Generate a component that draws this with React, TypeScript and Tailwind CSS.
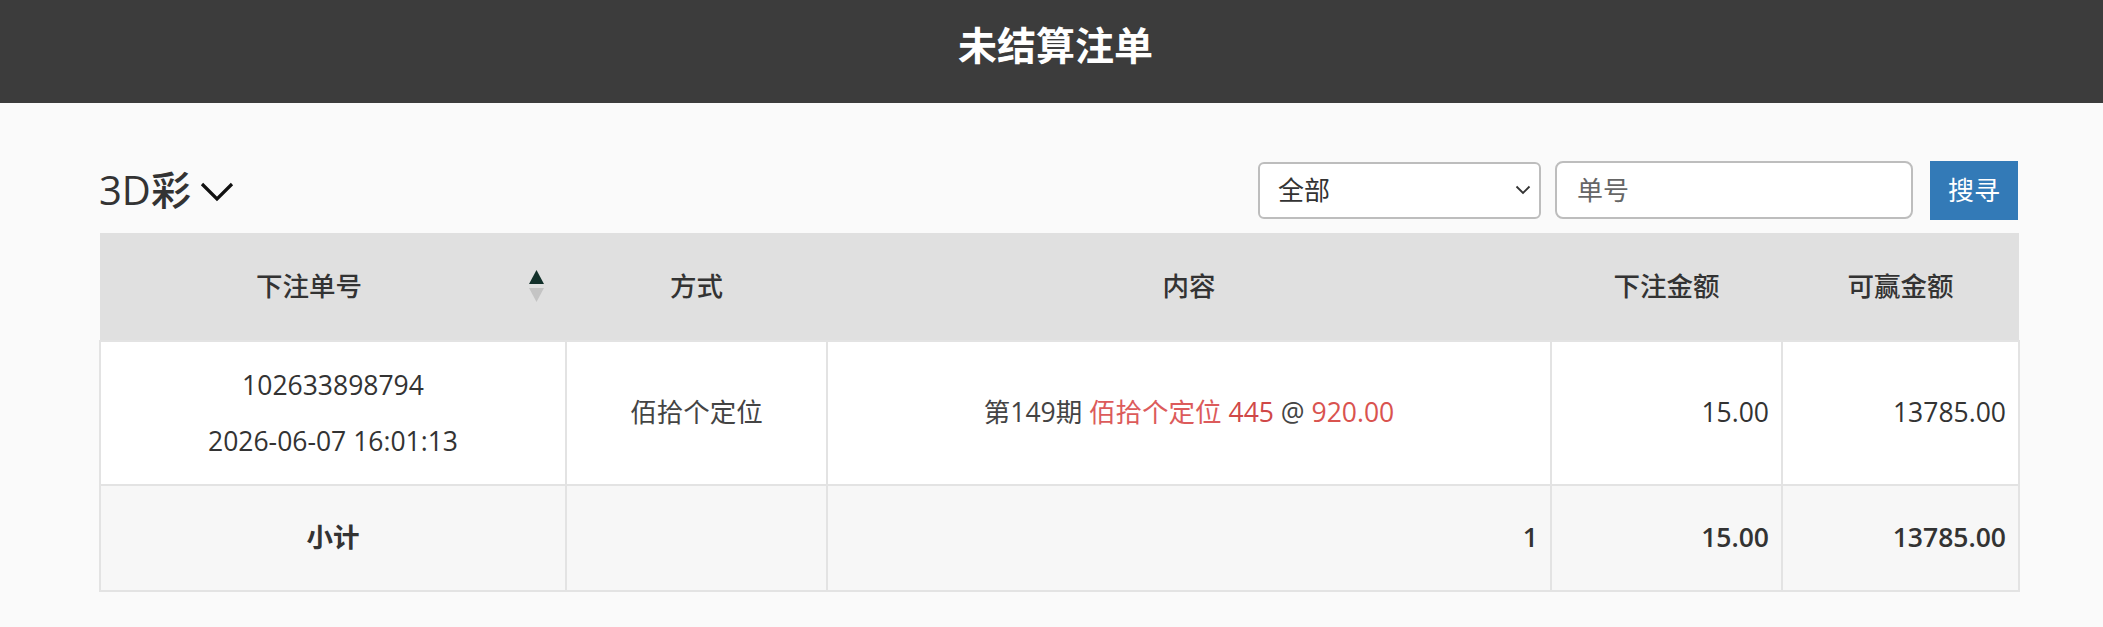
import React from "react";

const font = { fontFamily: '"Open Sans", "Noto Sans CJK SC", sans-serif' };

export default function App() {
  return (
    <div className="min-h-[627px] bg-[#fafafa] text-[#333]" style={font}>
      <div className="h-[103px] bg-[#3c3c3c] flex items-center justify-center pb-[14px] pl-[8px]">
        <h1 className="text-[39px] font-bold text-white leading-none">未结算注单</h1>
      </div>
      <div className="pl-[99px] pr-[85px] pt-[57px]">
        <div className="flex items-center justify-between h-[60px]">
          <div className="flex items-center gap-[8px] text-[40px] text-[#333] leading-none font-medium">
            <span>3D彩</span>
            <svg width="36" height="22" viewBox="0 0 36 22" className="mt-[4px]">
              <path d="M3 3 L18 18 L33 3" fill="none" stroke="#111" strokeWidth="3.2" />
            </svg>
          </div>
          <div className="flex items-center">
            <div className="w-[283px] h-[57px] border-2 border-[#bdbdbd] rounded-[6px] bg-white flex items-center justify-between pl-[18px] pr-[8px] text-[26px] text-[#333]">
              <span>全部</span>
              <svg width="16" height="10" viewBox="0 0 16 10">
                <path d="M1.5 1.5 L8 8 L14.5 1.5" fill="none" stroke="#333" strokeWidth="1.8" />
              </svg>
            </div>
            <div className="ml-[14px] w-[358px] h-[58px] border-2 border-[#bdbdbd] rounded-[8px] bg-white flex items-center pl-[20px] text-[26px] text-[#666]">
              单号
            </div>
            <button className="ml-[17px] w-[88px] h-[59px] bg-[#337ab7] text-white text-[26px] flex items-center justify-center">
              搜寻
            </button>
          </div>
        </div>
        <table className="mt-[13px] w-[1919px] border-collapse table-fixed text-[26.5px]">
          <colgroup>
            <col className="w-[466px]" />
            <col className="w-[261px]" />
            <col className="w-[724px]" />
            <col className="w-[231px]" />
            <col className="w-[237px]" />
          </colgroup>
          <thead>
            <tr className="h-[108px] bg-[#e0e0e0] text-[#333]">
              <th className="font-medium text-center relative pr-[48px]">
                下注单号
                <span className="absolute left-[429px] top-[37px] flex flex-col items-center gap-[4px]">
                  <svg width="15" height="14" viewBox="0 0 15 14"><path d="M7.5 0 L15 14 L0 14 Z" fill="#12302a" /></svg>
                  <svg width="15" height="14" viewBox="0 0 15 14"><path d="M0 0 L15 0 L7.5 14 Z" fill="#c4c4c4" /></svg>
                </span>
              </th>
              <th className="font-medium text-center">方式</th>
              <th className="font-medium text-center">内容</th>
              <th className="font-medium text-center">下注金额</th>
              <th className="font-medium text-center">可赢金额</th>
            </tr>
          </thead>
          <tbody>
            <tr className="h-[144px] bg-white">
              <td className="border-2 border-[#e3e3e3] text-center leading-[56px]">
                <div>102633898794</div>
                <div>2026-06-07 16:01:13</div>
              </td>
              <td className="border-2 border-[#e3e3e3] text-center text-[#444]">佰拾个定位</td>
              <td className="border-2 border-[#e3e3e3] text-center text-[#444]">
                第149期 <span className="text-[#dc5b5b]">佰拾个定位</span>{" "}
                <span className="text-[#d04848]">445</span> @{" "}
                <span className="text-[#d9534f]">920.00</span>
              </td>
              <td className="border-2 border-[#e3e3e3] text-right pr-[12px]">15.00</td>
              <td className="border-2 border-[#e3e3e3] text-right pr-[12px]">13785.00</td>
            </tr>
            <tr className="h-[106px] bg-[#f7f7f7] font-semibold">
              <td className="border-2 border-[#e3e3e3] text-center">小计</td>
              <td className="border-2 border-[#e3e3e3]"></td>
              <td className="border-2 border-[#e3e3e3] text-right pr-[12px]">1</td>
              <td className="border-2 border-[#e3e3e3] text-right pr-[12px]">15.00</td>
              <td className="border-2 border-[#e3e3e3] text-right pr-[12px]">13785.00</td>
            </tr>
          </tbody>
        </table>
      </div>
    </div>
  );
}
